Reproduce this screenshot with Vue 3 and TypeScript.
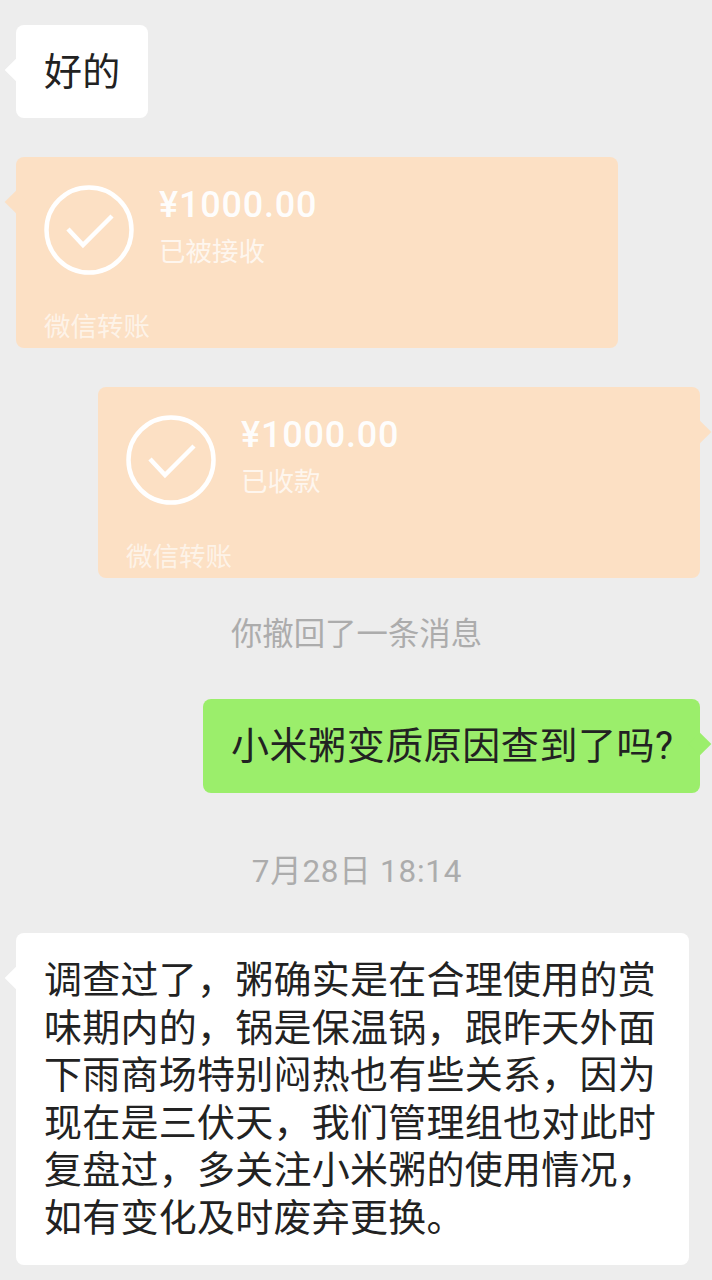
<script setup lang="ts">
const lines = ['调查过了，粥确实是在合理使用的赏','味期内的，锅是保温锅，跟昨天外面','下雨商场特别闷热也有些关系，因为','现在是三伏天，我们管理组也对此时','复盘过，多关注小米粥的使用情况，','如有变化及时废弃更换。']
</script>
<template>
  <main class="page">
    <div class="row"><div class="bubble white left short">好的</div></div>
    <div class="row mt39">
      <div class="card left">
        <div class="top">
          <svg class="check" viewBox="0 0 90 90"><circle cx="45" cy="45" r="42.5"/><path d="M24 44 L39 60 L68 31"/></svg>
          <div class="info"><div class="amount">¥1000.00</div><div class="status">已被接收</div></div>
        </div>
        <div class="foot">微信转账</div>
      </div>
    </div>
    <div class="row end mt39">
      <div class="card right">
        <div class="top">
          <svg class="check" viewBox="0 0 90 90"><circle cx="45" cy="45" r="42.5"/><path d="M24 44 L39 60 L68 31"/></svg>
          <div class="info"><div class="amount">¥1000.00</div><div class="status">已收款</div></div>
        </div>
        <div class="foot">微信转账</div>
      </div>
    </div>
    <div class="notice recall">你撤回了一条消息</div>
    <div class="row end"><div class="bubble green right">小米粥变质原因查到了吗?</div></div>
    <div class="notice time">7月28日 18:14</div>
    <div class="row"><div class="bubble white left long"><div v-for="l in lines" :key="l">{{ l }}</div></div></div>
  </main>
</template>
<style scoped>
.page{width:712px;height:1280px;box-sizing:border-box;background:#ededed;padding:25px 12px 0 16px;overflow:hidden;font-family:"Roboto","Noto Sans CJK SC",sans-serif;color:#222;display:flex;flex-direction:column}
.row{display:flex}
.end{justify-content:flex-end}
.mt39{margin-top:39px}
.bubble{position:relative;border-radius:8px;font-size:38px;letter-spacing:.25px;box-sizing:border-box}
.left::before,.right::after{content:"";position:absolute;width:16px;height:16px;transform:rotate(45deg);background:inherit;top:37px}
.left::before{left:-8px}
.right::after{right:-8px}
.white{background:#fff}
.green{background:#9bee6b}
.short{width:132px;height:93px;padding:0 28px;line-height:94px;white-space:nowrap}
.card{position:relative;width:602px;height:191px;background:#fce0c4;border-radius:8px;box-sizing:border-box;padding:28px 28px 0;color:#fff;display:flex;flex-direction:column}
.top{display:flex;gap:25px}
.check{width:90px;height:90px;flex:none;fill:none;stroke:#fff;stroke-width:4.5}
.amount{font-size:36px;line-height:40px;letter-spacing:.8px;font-weight:500;opacity:.95}
.status{font-size:26.5px;line-height:36px;margin-top:9px;opacity:.72}
.foot{font-size:26.5px;line-height:32px;margin-top:auto;padding-bottom:5px;opacity:.62}
.notice{color:#acacac;text-align:center;font-size:31.4px}
.recall{margin-top:35px;line-height:44px;margin-bottom:42px;padding-right:3px}
.green{height:94px;line-height:95px;padding:0 28px;width:497px;white-space:nowrap;letter-spacing:.55px}
.time{margin-top:57px;line-height:44px;margin-bottom:39px;letter-spacing:.8px;padding-right:2px}
.long{width:673px;height:332px;padding:24px 28px;line-height:47.6px}
</style>
